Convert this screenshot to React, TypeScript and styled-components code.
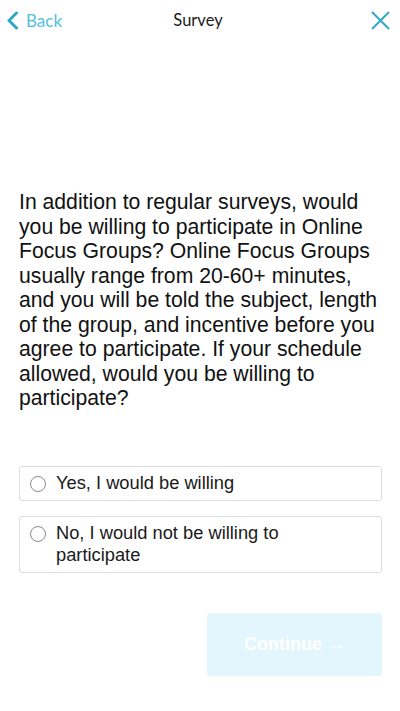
import React, { useState } from 'react';
import styled, { createGlobalStyle } from 'styled-components';

const GlobalStyle = createGlobalStyle`
  html, body {
    margin: 0;
    padding: 0;
    background: #ffffff;
  }
  * {
    box-sizing: border-box;
  }
`;

const options = [
  { id: 'yes', label: 'Yes, I would be willing' },
  { id: 'no', label: 'No, I would not be willing to participate' },
];

export default function App() {
  const [selected, setSelected] = useState<string | null>(null);

  return (
    <>
      <GlobalStyle />
      <Page>
        <Header>
          <BackButton>
            <svg width="13" height="19" viewBox="0 0 13 19" fill="none">
              <path d="M10.5 2 L3 9.5 L10.5 17" stroke="#2ea8c5" strokeWidth="3" strokeLinecap="round" strokeLinejoin="round" />
            </svg>
            <span>Back</span>
          </BackButton>
          <Title>Survey</Title>
          <CloseButton aria-label="Close">
            <svg width="19" height="19" viewBox="0 0 19 19" fill="none">
              <path d="M1.5 1.5 L17.5 17.5 M17.5 1.5 L1.5 17.5" stroke="#2aa7c4" strokeWidth="1.8" strokeLinecap="round" />
            </svg>
          </CloseButton>
        </Header>

        <Content>
          <Question>
            In addition to regular surveys, would you be willing to participate in Online Focus Groups? Online Focus
            Groups usually range from 20-60+ minutes, and you will be told the subject, length of the group, and
            incentive before you agree to participate. If your schedule allowed, would you be willing to participate?
          </Question>

          <Options>
            {options.map((o) => (
              <Option key={o.id} onClick={() => setSelected(o.id)}>
                <Radio $checked={selected === o.id} />
                <OptionLabel>{o.label}</OptionLabel>
              </Option>
            ))}
          </Options>

          <Footer>
            <ContinueButton disabled={!selected}>Continue →</ContinueButton>
          </Footer>
        </Content>
      </Page>
    </>
  );
}

const Page = styled.div`
  width: 400px;
  min-height: 711px;
  display: flex;
  flex-direction: column;
  background: #fff;
`;

const Header = styled.div`
  height: 40px;
  display: grid;
  grid-template-columns: 1fr auto 1fr;
  align-items: center;
  padding: 0 10px 0 6px;
`;

const BackButton = styled.button`
  justify-self: start;
  display: flex;
  align-items: center;
  gap: 7px;
  background: none;
  border: none;
  padding: 0;
  cursor: pointer;
  font-family: Lato, 'Open Sans', sans-serif;
  font-size: 17px;
  color: #55c1de;
`;

const Title = styled.div`
  font-family: Lato, 'Open Sans', sans-serif;
  font-size: 16.5px;
  color: #1b1b1b;
`;

const CloseButton = styled.button`
  justify-self: end;
  display: flex;
  background: none;
  border: none;
  padding: 0;
  cursor: pointer;
`;

const Content = styled.div`
  padding: 150px 19px 0 19px;
  display: flex;
  flex-direction: column;
`;

const Question = styled.p`
  margin: 0;
  font-family: 'Liberation Sans', Arial, sans-serif;
  font-size: 21.2px;
  line-height: 24.5px;
  color: #111;
`;

const Options = styled.div`
  margin-top: 55px;
  display: flex;
  flex-direction: column;
  gap: 15px;
`;

const Option = styled.div`
  display: flex;
  align-items: flex-start;
  gap: 10px;
  padding: 5px 10px 6px 10px;
  border: 1px solid #dedede;
  border-radius: 3px;
  cursor: pointer;
  width: 363px;
`;

const Radio = styled.span<{ $checked: boolean }>`
  flex: none;
  width: 16px;
  height: 16px;
  margin-top: 4px;
  border-radius: 50%;
  border: 1px solid ${(p) => (p.$checked ? '#2aa7c4' : '#8a8a8a')};
  background: ${(p) => (p.$checked ? 'radial-gradient(circle, #2aa7c4 0 4px, #fff 4.5px)' : '#fff')};
`;

const OptionLabel = styled.span`
  font-family: 'Liberation Sans', Arial, sans-serif;
  font-size: 18.3px;
  line-height: 22px;
  color: #1a1a1a;
  padding-right: 40px;
`;

const Footer = styled.div`
  margin-top: 40px;
  display: flex;
  justify-content: flex-end;
  width: 363px;
`;

const ContinueButton = styled.button`
  width: 175px;
  height: 63px;
  border: none;
  border-radius: 4px;
  background: ${(p) => (p.disabled ? '#e3f6fd' : '#2aa7c4')};
  color: #ffffff;
  font-family: 'Liberation Sans', Arial, sans-serif;
  font-weight: bold;
  font-size: 18px;
  cursor: pointer;
`;
